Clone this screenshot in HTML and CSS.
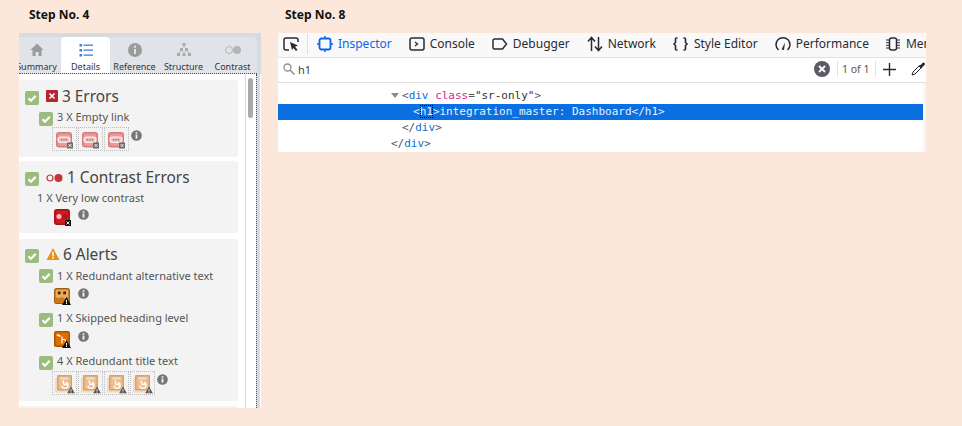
FILE: index.html
```html
<!DOCTYPE html>
<html lang="en">
<head>
<meta charset="utf-8">
<title>Steps</title>
<link rel="stylesheet" href="styles.css">
</head>
<body>
<svg class="defs" width="0" height="0" aria-hidden="true">
  <defs>
    <symbol id="check" viewBox="0 0 14 14"><rect width="14" height="14" rx="2" fill="#9bbb7f"/><path d="M3.500 7.300l2.400 2.400 4.800-4.800" fill="none" stroke="#fff" stroke-width="2.200"/></symbol>
    <symbol id="info" viewBox="0 0 12 12"><circle cx="6" cy="6" r="5.800" fill="#757575"/><rect x="5" y="5" width="2" height="4.400" fill="#f3f3f3"/><rect x="5" y="2.400" width="2" height="1.700" fill="#f3f3f3"/></symbol>
    <symbol id="warnmini" viewBox="0 0 9 8"><path d="M4.500 0L9 8H0z" fill="#111"/><rect x="4" y="3" width="1" height="2.600" fill="#fff"/><rect x="4" y="6" width="1" height="1" fill="#fff"/></symbol>
    <symbol id="warngrey" viewBox="0 0 9 8"><path d="M4.500 0L9 8H0z" fill="#555"/><rect x="4" y="3" width="1" height="2.600" fill="#fff"/><rect x="4" y="6" width="1" height="1" fill="#fff"/></symbol>
    <symbol id="link" viewBox="0 0 25 24"><rect x="4" y="5" width="16" height="15.500" rx="3" fill="#d67c7c"/><rect x="5.500" y="6.500" width="13" height="12.500" rx="2" fill="#e79a9a"/><rect x="6" y="10" width="12" height="5.500" rx="2.700" fill="#f2c4c4" stroke="#fdf0f0" stroke-width="1.200"/><circle cx="9.500" cy="12.700" r=".9" fill="#c96a6a"/><circle cx="12" cy="12.700" r=".9" fill="#c96a6a"/><circle cx="14.500" cy="12.700" r=".9" fill="#c96a6a"/><rect x="15" y="15.500" width="6" height="6" fill="#6b6b6b"/><path d="M16.500 17l3 3m0-3l-3 3" stroke="#fff" stroke-width=".9"/></symbol>
    <symbol id="title" viewBox="0 0 25 24"><rect x="3" y="7" width="13" height="14.500" fill="#f0dcc6"/><rect x="5" y="4" width="15" height="15.500" rx="1" fill="#dba268"/><rect x="6.500" y="5.500" width="12" height="12.500" fill="#eebd8c"/><rect x="8.500" y="6.500" width="8" height="1.800" fill="#e9e4dc"/><path d="M11 9.500l1 4h3.500M13.800 11.500a3 3 0 1 1-3.800 3.200" fill="none" stroke="#fff" stroke-width="1.300"/><use href="#warngrey" x="15" y="15.500" width="8" height="7"/></symbol>
  </defs>
</svg>
<main class="page">
  <section class="step step-a">
    <h2 class="step-title">Step No. 4</h2>
    <div class="panel">
      <nav class="tabs">
        <div class="tab">
          <svg class="tab-icon" viewBox="0 0 16 16"><path d="M8 1.500L1.500 8H3.500v6h3v-4h3v4h3V8h2z" fill="#9b9b9b"/></svg>
          <span>Summary</span>
        </div>
        <div class="tab tab-on">
          <svg class="tab-icon" viewBox="0 0 16 16" fill="#3f7fd8"><rect x="1.500" y="2" width="2.500" height="2.500"/><rect x="1.500" y="7" width="2.500" height="2.500"/><rect x="1.500" y="12" width="2.500" height="2.500"/><rect x="5.500" y="2.500" width="9.500" height="1.300"/><rect x="5.500" y="7.500" width="9.500" height="1.300"/><rect x="5.500" y="12.500" width="9.500" height="1.300"/></svg>
          <span>Details</span>
        </div>
        <div class="tab">
          <svg class="tab-icon" viewBox="0 0 16 16"><circle cx="8" cy="8" r="7" fill="#9b9b9b"/><rect x="7" y="7" width="2" height="5" fill="#e0e4e8"/><rect x="7" y="3.700" width="2" height="2" fill="#e0e4e8"/></svg>
          <span>Reference</span>
        </div>
        <div class="tab">
          <svg class="tab-icon" viewBox="0 0 16 16" fill="#a9a9a9"><rect x="6.500" y="1" width="3" height="3"/><rect x="4" y="6" width="3" height="3"/><rect x="9" y="6" width="3" height="3"/><rect x="1" y="11" width="3" height="3"/><rect x="6.500" y="11" width="3" height="3"/><rect x="12" y="11" width="3" height="3"/><path d="M8 4v2M5.500 9L2.500 11M10.500 9l3 2M8 9v2" stroke="#a9a9a9" stroke-width=".7"/></svg>
          <span>Structure</span>
        </div>
        <div class="tab">
          <svg class="tab-icon tab-icon-wide" viewBox="0 0 18 16"><circle cx="5" cy="8" r="3.500" fill="none" stroke="#b5b5b5"/><circle cx="13" cy="8" r="4" fill="#b5b5b5"/></svg>
          <span>Contrast</span>
        </div>
      </nav>
      <div class="panel-body">
        <div class="cards">
          <article class="card card-errors">
            <div class="head">
              <svg class="check"><use href="#check"/></svg>
              <svg class="head-icon" viewBox="0 0 12 12"><rect width="12" height="12" rx="1" fill="#b5272d"/><path d="M3.500 3.500l5 5m0-5l-5 5" stroke="#fff" stroke-width="1.600"/></svg>
              <h3>3 Errors</h3>
            </div>
            <div class="sub">
              <svg class="check"><use href="#check"/></svg>
              <span>3 X Empty link</span>
            </div>
            <div class="icons">
              <svg class="thumb" viewBox="0 0 25 24"><use href="#link"/></svg>
              <svg class="thumb" viewBox="0 0 25 24"><use href="#link"/></svg>
              <svg class="thumb" viewBox="0 0 25 24"><use href="#link"/></svg>
              <svg class="info"><use href="#info"/></svg>
            </div>
          </article>
          <article class="card card-contrast">
            <div class="head">
              <svg class="check"><use href="#check"/></svg>
              <svg class="head-icon head-icon-wide" viewBox="0 0 17 12"><circle cx="4" cy="6" r="3" fill="none" stroke="#b9353b" stroke-width="1.200"/><circle cx="12.500" cy="6" r="4" fill="#c1343a"/></svg>
              <h3>1 Contrast Errors</h3>
            </div>
            <div class="sub sub-plain"><span>1 X Very low contrast</span></div>
            <div class="icons icons-solo">
              <svg class="solo" viewBox="0 0 17 17"><rect width="16" height="16" rx="3" fill="#a40f17"/><rect x="1.500" y="1.500" width="13" height="13" rx="1.500" fill="#cf1a22"/><circle cx="5" cy="7.500" r="2.500" fill="#f6b9bd"/><circle cx="11" cy="7.500" r="2.500" fill="#a9151c"/><rect x="11" y="11" width="6" height="6" fill="#111"/><path d="M12.500 12.500l3 3m0-3l-3 3" stroke="#fff" stroke-width=".9"/></svg>
              <svg class="info"><use href="#info"/></svg>
            </div>
          </article>
          <article class="card card-alerts">
            <div class="head">
              <svg class="check"><use href="#check"/></svg>
              <svg class="head-icon head-icon-warn" viewBox="0 0 13 12"><path d="M6.500 0L13 12H0z" fill="#e8901a"/><rect x="5.700" y="3.800" width="1.600" height="4.500" fill="#fff"/><rect x="5.700" y="9" width="1.600" height="1.600" fill="#fff"/></svg>
              <h3>6 Alerts</h3>
            </div>
            <div class="sub sub-first">
              <svg class="check"><use href="#check"/></svg>
              <span>1 X Redundant alternative text</span>
            </div>
            <div class="icons icons-solo">
              <svg class="solo" viewBox="0 0 17 17"><rect width="16" height="16" rx="2.500" fill="#a35f10"/><rect x="1.500" y="1.500" width="13" height="13" rx="1" fill="#ecaa5c"/><rect x="3.800" y="3.500" width="2.800" height="2.800" fill="#3b2a12"/><rect x="9.200" y="3.500" width="2.800" height="2.800" fill="#3b2a12"/><path d="M1.500 9l3 1.500 3-1.500 3 1.500 4-1.500v5.500h-13z" fill="#cf7710"/><use href="#warnmini" x="8" y="9" width="9" height="8"/></svg>
              <svg class="info"><use href="#info"/></svg>
            </div>
            <div class="sub sub-next">
              <svg class="check"><use href="#check"/></svg>
              <span>1 X Skipped heading level</span>
            </div>
            <div class="icons icons-solo icons-solo-b">
              <svg class="solo" viewBox="0 0 17 17"><rect width="16" height="16" rx="2" fill="#a85400"/><rect x="1.500" y="1.500" width="13" height="13" fill="#dc6f00"/><path d="M3 3.800l3.500 1.400" fill="none" stroke="#fff" stroke-width="1.500"/><path d="M8 5.500v7M8 8.500h2.500a1 1 0 0 1 1 1v3" fill="none" stroke="#fff" stroke-width="1.200"/><use href="#warnmini" x="8" y="9" width="9" height="8"/></svg>
              <svg class="info"><use href="#info"/></svg>
            </div>
            <div class="sub sub-next">
              <svg class="check"><use href="#check"/></svg>
              <span>4 X Redundant title text</span>
            </div>
            <div class="icons">
              <svg class="thumb" viewBox="0 0 25 24"><use href="#title"/></svg>
              <svg class="thumb" viewBox="0 0 25 24"><use href="#title"/></svg>
              <svg class="thumb" viewBox="0 0 25 24"><use href="#title"/></svg>
              <svg class="thumb" viewBox="0 0 25 24"><use href="#title"/></svg>
              <svg class="info"><use href="#info"/></svg>
            </div>
          </article>
          <article class="card card-more"></article>
        </div>
        <div class="track"><div class="thumbbar"></div></div>
        <div class="edge"></div>
      </div>
    </div>
  </section>

  <section class="step step-b">
    <h2 class="step-title step-title-b">Step No. 8</h2>
    <div class="devtools">
      <div class="toolbar">
        <svg class="pick" viewBox="0 0 16 16"><path d="M6 14H3a2 2 0 0 1-2-2V4a2 2 0 0 1 2-2h10a2 2 0 0 1 2 2v2" fill="none" stroke="#2b2a33" stroke-width="1.500"/><path d="M7 6l8 3.500-3 1.300 2.500 3-1.500 1.200-2.500-3L9 14z" fill="#2b2a33"/></svg>
        <span class="tool-sep"></span>
        <div class="tool tool-on">
          <svg class="tool-icon" viewBox="0 0 16 16"><rect x="2.500" y="2.500" width="11" height="11" rx="2" fill="none" stroke="#0a66e8" stroke-width="1.800"/><path d="M8 0v2.500M8 13.500V16M0 8h2.500M13.500 8H16" stroke="#0a66e8" stroke-width="1.400"/></svg>
          <span>Inspector</span>
        </div>
        <div class="tool tool-console">
          <svg class="tool-icon" viewBox="0 0 16 16"><rect x="1" y="2" width="14" height="12" rx="2" fill="none" stroke="#2b2a33" stroke-width="1.500"/><path d="M6 6l2.500 2L6 10" fill="none" stroke="#2b2a33" stroke-width="1.300"/></svg>
          <span>Console</span>
        </div>
        <div class="tool tool-debugger">
          <svg class="tool-icon" viewBox="0 0 16 16"><path d="M2.500 3h8l4 5-4 5h-8a1.500 1.500 0 0 1-1.500-1.500v-7A1.500 1.500 0 0 1 2.500 3z" fill="none" stroke="#2b2a33" stroke-width="1.500"/></svg>
          <span>Debugger</span>
        </div>
        <div class="tool tool-network">
          <svg class="tool-icon" viewBox="0 0 16 16"><path d="M4.500 15V2M1 5.500l3.500-4 3.500 4M11.500 1v13M8 10.500l3.500 4 3.500-4" fill="none" stroke="#2b2a33" stroke-width="1.500"/></svg>
          <span>Network</span>
        </div>
        <div class="tool tool-style">
          <svg class="tool-icon tool-icon-braces" viewBox="0 0 17 16"><path d="M5.500 2H4.500a1 1 0 0 0-1 1v3.500L2 8l1.500 1.500V13a1 1 0 0 0 1 1h1M11.500 2h1a1 1 0 0 1 1 1v3.500L15 8l-1.500 1.500V13a1 1 0 0 1-1 1h-1" fill="none" stroke="#2b2a33" stroke-width="1.600"/></svg>
          <span>Style Editor</span>
        </div>
        <div class="tool tool-perf">
          <svg class="tool-icon" viewBox="0 0 16 16"><path d="M3.500 14A7 7 0 1 1 12.500 14" fill="none" stroke="#2b2a33" stroke-width="1.500"/><path d="M6.500 13.500L10 6.500 9 14z" fill="#2b2a33"/></svg>
          <span>Performance</span>
        </div>
        <div class="tool tool-mem">
          <svg class="tool-icon" viewBox="0 0 16 16"><rect x="4.500" y="2" width="7" height="12" rx="2" fill="none" stroke="#2b2a33" stroke-width="1.500"/><path d="M1 4h3M1 6.700h3M1 9.300h3M1 12h3M12 4h3M12 6.700h3M12 9.300h3M12 12h3" stroke="#2b2a33"/></svg>
          <span>Memory</span>
        </div>
      </div>
      <div class="search">
        <svg class="mag" viewBox="0 0 12 12"><circle cx="4.500" cy="4.500" r="3.500" fill="none" stroke="#8f8f8f" stroke-width="1.300"/><path d="M7 7l4.500 4.500" stroke="#8f8f8f" stroke-width="1.500"/></svg>
        <span class="query">h1</span>
        <svg class="clear" viewBox="0 0 16 16"><circle cx="8" cy="8" r="8" fill="#5b5b66"/><path d="M5 5l6 6m0-6l-6 6" stroke="#fff" stroke-width="1.800"/></svg>
        <span class="search-sep"></span>
        <span class="count">1 of 1</span>
        <span class="search-sep search-sep-b"></span>
        <svg class="plus" viewBox="0 0 13 13"><path d="M6.500 0v13M0 6.500h13" stroke="#2b2a33" stroke-width="1.400"/></svg>
        <svg class="dropper" viewBox="0 0 14 14"><path d="M1 13l1-3 6-6 2 2-6 6z" fill="none" stroke="#2b2a33"/><path d="M7.500 3.500l3 3 1-1.500 2-2a1.300 1.300 0 0 0-2-2l-2 2z" fill="#2b2a33"/></svg>
      </div>
      <div class="markup">
        <div class="code">
          <div class="line line-1"><i class="tri"></i><span class="br">&lt;</span><span class="tag">div</span> <span class="attr">class</span><span class="br">=</span><span class="val">"sr-only"</span><span class="br">&gt;</span></div>
          <div class="line line-sel">&lt;<b class="focus">h1</b>&gt;integration_master: Dashboard&lt;/h1&gt;</div>
          <div class="line line-3"><span class="br">&lt;/</span><span class="tag">div</span><span class="br">&gt;</span></div>
          <div class="line line-4"><span class="br">&lt;/</span><span class="tag">div</span><span class="br">&gt;</span></div>
        </div>
        <div class="markup-side"></div>
      </div>
    </div>
  </section>
</main>
</body>
</html>
```
FILE: styles.css
```css
* { box-sizing: border-box; }
html, body { margin: 0; padding: 0; }
body {
  width: 962px;
  height: 426px;
  overflow: hidden;
  background: #fce8da;
  font-family: "Noto Sans", "Open Sans", sans-serif;
  color: #4a4a4a;
}
.defs { display: block; height: 0; }
.page { display: flex; align-items: flex-start; padding-left: 19px; }
.step-a { width: 242px; }
.step-b { width: 648px; margin-left: 17px; }
.step-title {
  margin: 0;
  height: 33px;
  padding: 7px 0 0 10px;
  font-size: 12px;
  line-height: 16px;
  font-weight: 700;
  color: #111;
}
.step-title-b { padding-left: 7px; }

.panel { height: 375px; overflow: hidden; background: #d6dbe0; display: flex; flex-direction: column; }
.tabs {
  flex: none;
  height: 37px;
  margin: 4px 4px 0 0;
  display: flex;
  background: #e0e4e8;
  border-radius: 0 5px 0 0;
  border-bottom: 1px dotted #44556a;
  overflow: hidden;
}
.tab {
  flex: none;
  width: 49px;
  height: 36px;
  display: flex;
  flex-direction: column;
  align-items: center;
  font-size: 9px;
  line-height: 12px;
  color: #333;
  padding-top: 5px;
}
.tab:first-child { width: 42px; }
.tab:first-child span { margin-left: -7px; }
.tab:first-child svg { margin-left: -7px; }
.tab-on { background: #fff; border-radius: 4px 4px 0 0; }
.tab-icon { width: 16px; height: 16px; margin-bottom: 3px; display: block; flex: none; }
.tab-icon-wide { width: 18px; }

.panel-body { flex: 1; min-height: 0; display: flex; background: #fff; }
.cards { flex: none; width: 219px; padding-top: 6px; }
.card { background: #f3f3f3; border-radius: 3px; margin-bottom: 4px; overflow: hidden; }
.card-errors { height: 77px; }
.card-contrast { height: 72px; margin-bottom: 6px; }
.card-alerts { height: 162px; margin-bottom: 5px; }
.card-more { height: 8px; margin: 0; }
.head { display: flex; align-items: flex-start; padding: 10px 0 0 6px; height: 31px; }
.card-contrast .head { height: 30px; }
.card-alerts .head { padding-top: 9px; height: 29px; }
.check { width: 14px; height: 14px; flex: none; display: block; margin-top: 1px; }
.head-icon { width: 12px; height: 12px; margin: 0 0 0 7px; flex: none; }
.head-icon-wide { width: 17px; margin-top: 1px; }
.head-icon-warn { width: 14px; }
.head h3 { margin: -3px 0 0 4px; font-size: 15.400px; line-height: 20px; font-weight: 400; color: #444; }
.card-alerts .head h3 { margin-left: 3px; }
.sub { display: flex; height: 15px; font-size: 11px; line-height: 15px; padding-left: 20px; color: #555; }
.sub span { margin-left: 4px; margin-top: -2px; }
.sub-first span { margin-top: 0; }
.sub-next { margin-top: 7px; }
.sub-plain { padding-left: 18px; }
.sub-plain span { margin-left: 0; margin-top: -1px; }
.icons { display: flex; align-items: flex-start; padding: 1px 0 0 33px; gap: 1px; }
.thumb {
  width: 25px;
  height: 24px;
  flex: none;
  display: block;
  outline: 1px dotted #bdbdbd;
  outline-offset: -1px;
}
.info { width: 11px; height: 11px; margin: 3px 0 0 1px; flex: none; display: block; }
.icons-solo { padding: 5px 0 0 35px; gap: 7px; }
.icons-solo .info { margin: 0; }
.icons-solo-b { padding-top: 4px; }
.card-contrast .icons-solo { padding-top: 3px; }
.solo { width: 17px; height: 17px; flex: none; display: block; }

.track {
  flex: none;
  width: 19px;
  display: flex;
  padding-top: 4px;
  background: linear-gradient(to right, #fff 7px, #d8d8d8 7px, #d8d8d8 8px, #fff 8px);
}
.thumbbar { width: 5px; height: 40px; margin-left: 10px; background: #aaa; border-radius: 3px; }
.edge { flex: none; width: 4px; background: #d6dbe0; border-left: 1px dotted #44556a; margin-left: -1px; }

.devtools { height: 119px; display: flex; flex-direction: column; }
.toolbar {
  flex: none;
  height: 25px;
  display: flex;
  align-items: center;
  background: #f9f9fa;
  border-bottom: 1px solid #e0e0e2;
  font-size: 12px;
  color: #2b2a33;
  overflow: hidden;
  padding: 0 0 3px 5px;
  white-space: nowrap;
}
.pick { width: 16px; height: 16px; flex: none; }
.tool-sep { width: 1px; height: 20px; background: #e0e0e2; margin: 0 9px 0 8px; flex: none; }
.tool { display: flex; align-items: center; flex: none; }
.tool-icon { width: 16px; height: 16px; margin-right: 5px; flex: none; }
.tool-icon-braces { width: 17px; }
.tool-on { color: #0a66e8; }
.tool-console { margin-left: 17px; }
.tool-debugger { margin-left: 17px; }
.tool-network { margin-left: 17px; }
.tool-style { margin-left: 16px; }
.tool-perf { margin-left: 17px; }
.tool-mem { margin-left: 16px; }
.search {
  flex: none;
  height: 25px;
  display: flex;
  align-items: center;
  background: #fff;
  border-bottom: 1px solid #e0e0e2;
  padding: 0 0 2px 5px;
  font-size: 11px;
  color: #444;
}
.mag { width: 12px; height: 12px; flex: none; }
.query { margin-left: 3px; flex: 1; }
.clear { width: 16px; height: 16px; flex: none; }
.search-sep { width: 1px; height: 16px; background: #e4e4e6; flex: none; margin: 0 4px 0 7px; }
.search-sep-b { margin: 0 7px; }
.count { font-size: 10.500px; width: 26px; white-space: nowrap; color: #555; }
.plus { width: 13px; height: 13px; flex: none; }
.dropper { width: 14px; height: 14px; margin: 0 1px 0 15px; flex: none; }
.markup { flex: 1; display: flex; min-height: 0; background: #fff; }
.code {
  flex: none;
  width: 645px;
  padding-top: 5px;
  font: 11px/16px "DejaVu Sans Mono", monospace;
  color: #555;
}
.markup-side { flex: 1; background: #f7f7f7; }
.line { height: 16px; white-space: pre; }
.line-1 { padding-left: 113px; }
.line-sel { padding-left: 135px; background: #0a6fe0; color: #e8f1fc; }
.line-3 { padding-left: 124px; }
.line-4 { padding-left: 113px; }
.tri {
  display: inline-block;
  width: 8px;
  height: 0;
  border: 4px solid transparent;
  border-top: 5px solid #8a8a8a;
  border-bottom: 0;
  margin-right: 3px;
  vertical-align: 1px;
}
.br { color: #555; }
.tag { color: #0a6fd8; }
.attr { color: #d6249f; }
.val { color: #333; }
.focus { font-weight: 400; outline: 1px dotted #000; outline-offset: -1px; }
```
